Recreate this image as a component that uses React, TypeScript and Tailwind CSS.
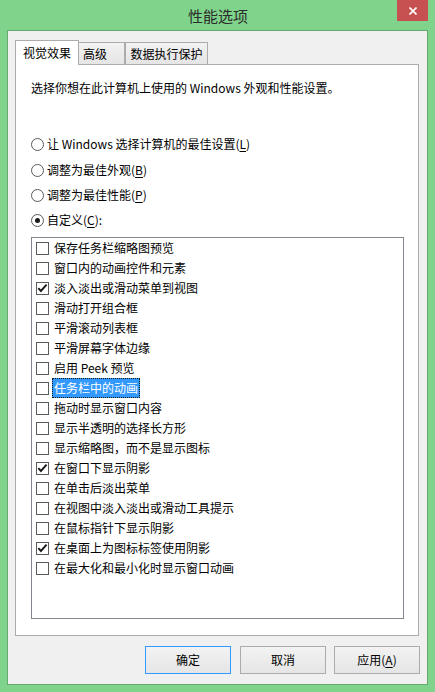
import React from "react";

const items: { label: string; checked: boolean }[] = [
  { label: "保存任务栏缩略图预览", checked: false },
  { label: "窗口内的动画控件和元素", checked: false },
  { label: "淡入淡出或滑动菜单到视图", checked: true },
  { label: "滑动打开组合框", checked: false },
  { label: "平滑滚动列表框", checked: false },
  { label: "平滑屏幕字体边缘", checked: false },
  { label: "启用 Peek 预览", checked: false },
  { label: "任务栏中的动画", checked: false },
  { label: "拖动时显示窗口内容", checked: false },
  { label: "显示半透明的选择长方形", checked: false },
  { label: "显示缩略图，而不是显示图标", checked: false },
  { label: "在窗口下显示阴影", checked: true },
  { label: "在单击后淡出菜单", checked: false },
  { label: "在视图中淡入淡出或滑动工具提示", checked: false },
  { label: "在鼠标指针下显示阴影", checked: false },
  { label: "在桌面上为图标标签使用阴影", checked: true },
  { label: "在最大化和最小化时显示窗口动画", checked: false },
];

function Checkbox({ checked }: { checked: boolean }) {
  return (
    <div className="w-[13px] h-[13px] shrink-0 border border-[#5a5a5a] bg-white">
      {checked && (
        <svg width="11" height="11" viewBox="0 0 11 11" className="block">
          <path d="M1.3 5.2 L3.9 8 L9.6 1.6" fill="none" stroke="#1a1a1a" strokeWidth="1.9" />
        </svg>
      )}
    </div>
  );
}

function Radio({ checked }: { checked: boolean }) {
  return (
    <div className="w-[13px] h-[13px] shrink-0 rounded-full border border-[#5a5a5a] bg-white flex items-center justify-center">
      {checked && <div className="w-[5px] h-[5px] rounded-full bg-[#1a1a1a]" />}
    </div>
  );
}

function RadioRow({ checked, children, className }: { checked: boolean; children: React.ReactNode; className: string }) {
  return (
    <div className={"h-[20px] flex items-center gap-[3px] " + className}>
      <Radio checked={checked} />
      <span className="leading-[16px] whitespace-nowrap">{children}</span>
    </div>
  );
}

export default function App() {
  return (
    <div className="w-[435px] h-[692px] bg-[#7fd38a] flex flex-col font-['Noto_Sans_CJK_SC',sans-serif] text-[12px] text-black overflow-hidden">
      <div className="h-[30px] shrink-0 grid grid-cols-[1fr_auto_1fr] items-start">
        <div />
        <div className="h-[31px] flex items-center text-[15px] leading-none text-[#2b2b2b] pl-[1px]">性能选项</div>
        <div className="flex justify-end pr-[7px]">
          <div className="w-[31px] h-[21px] bg-[#c75050] flex items-center justify-center">
            <svg width="8" height="8" viewBox="0 0 8 8" className="block">
              <path d="M0.5 0.5 L7.5 7.5 M7.5 0.5 L0.5 7.5" stroke="#ffffff" strokeWidth="1.6" fill="none" />
            </svg>
          </div>
        </div>
      </div>

      <div className="flex-1 mx-[7px] mb-[7px] border border-[#64a96d] bg-[#f0f0f0] flex flex-col pt-[9px] pl-[7px]">
        <div className="h-[24px] flex items-end">
          <div className="relative z-10 w-[64px] h-[25px] mb-[-1px] border border-b-0 border-[#acacac] bg-white flex items-center justify-center leading-[16px] pb-[1px]">
            视觉效果
          </div>
          <div className="w-[46px] h-[22px] border border-l-0 border-b-0 border-[#acacac] bg-gradient-to-b from-[#f2f2f2] to-[#e5e5e5] flex items-center pl-[4px] leading-[16px]">
            高级
          </div>
          <div className="w-[83px] h-[22px] border border-b-0 border-[#acacac] bg-gradient-to-b from-[#f2f2f2] to-[#e5e5e5] flex items-center justify-center leading-[16px]">
            数据执行保护
          </div>
        </div>

        <div className="w-[404px] h-[572px] border border-[#acacac] bg-white flex flex-col pt-[15px] pl-[15px]">
          <div className="leading-[16px] h-[16px] whitespace-nowrap">选择你想在此计算机上使用的 Windows 外观和性能设置。</div>
          <RadioRow checked={false} className="mt-[38px]">
            让 Windows 选择计算机的最佳设置(<u className="underline-offset-2">L</u>)
          </RadioRow>
          <RadioRow checked={false} className="mt-[6px]">
            调整为最佳外观(<u className="underline-offset-2">B</u>)
          </RadioRow>
          <RadioRow checked={false} className="mt-[5px]">
            调整为最佳性能(<u className="underline-offset-2">P</u>)
          </RadioRow>
          <RadioRow checked={true} className="mt-[5px]">
            自定义(<u className="underline-offset-2">C</u>):
          </RadioRow>

          <div className="mt-[7px] w-[373px] h-[382px] border border-[#828790] bg-white flex flex-col">
            {items.map((it, i) => (
              <div key={i} className="h-[20px] flex items-center pl-[4px]">
                <Checkbox checked={it.checked} />
                <span
                  className={
                    i === 7
                      ? "ml-[3px] h-[20px] flex items-center px-[1px] border border-dotted border-[#1a1a1a] bg-[#3399ff] text-white leading-[16px] whitespace-nowrap"
                      : "ml-[3px] h-[20px] flex items-center px-[1px] border border-transparent leading-[16px] whitespace-nowrap"
                  }
                >
                  {it.label}
                </span>
              </div>
            ))}
          </div>
        </div>

        <div className="mt-[10px] h-[28px] flex justify-end pr-[7px]">
          <div className="w-[86px] h-[28px] border border-[#3399ff] bg-gradient-to-b from-[#f2f2f2] to-[#e5e5e5] flex items-center justify-center leading-[16px]">
            确定
          </div>
          <div className="ml-[9px] w-[86px] h-[28px] border border-[#acacac] bg-gradient-to-b from-[#f2f2f2] to-[#e5e5e5] flex items-center justify-center leading-[16px]">
            取消
          </div>
          <div className="ml-[8px] w-[86px] h-[28px] border border-[#acacac] bg-gradient-to-b from-[#f2f2f2] to-[#e5e5e5] flex items-center justify-center leading-[16px]">
            应用(<u className="underline-offset-2">A</u>)
          </div>
        </div>
      </div>
    </div>
  );
}
